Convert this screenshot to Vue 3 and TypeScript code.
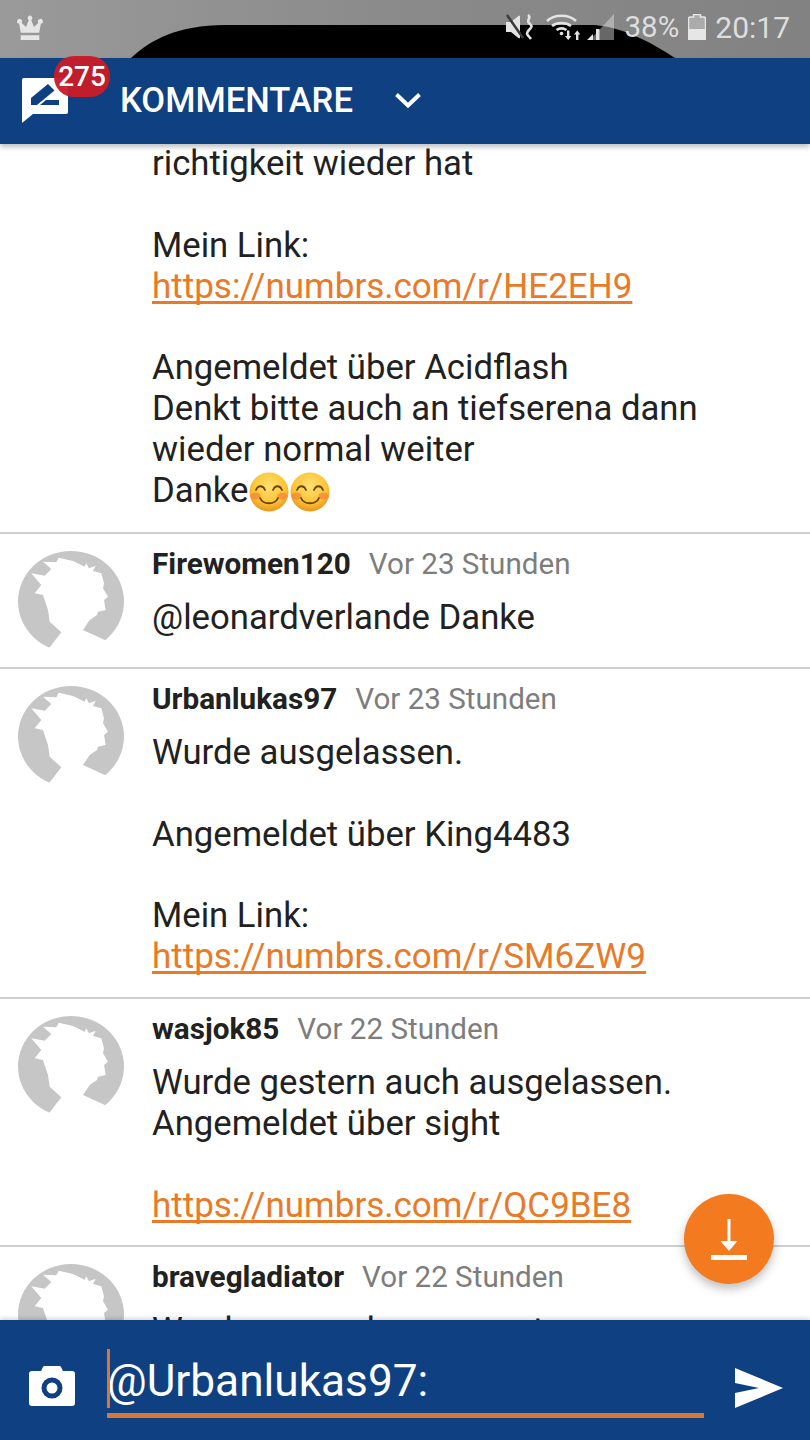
<template>
  <div class="phone">
    <!-- Status bar -->
    <div class="status-bar">
      <svg class="status-bg" viewBox="0 0 810 58" preserveAspectRatio="none">
        <path d="M131 58C150 40 178 25 225 25H595C625 28 650 42 675 58Z" fill="#000" />
      </svg>
      <svg class="crown" viewBox="3 0 24 26" width="30" height="27">
        <path
          d="M15 1.500a2.400 2.400 0 0 1 1.200 4.400l2.700 6.600 4.200-4a2.400 2.400 0 1 1 2.400.9L23.800 18H6.200L4.500 9.400a2.400 2.400 0 1 1 2.400-.9l4.200 4 2.700-6.600A2.400 2.400 0 0 1 15 1.500ZM6 20.500h18V25H6Z"
          fill="#e6e6e6"
        />
      </svg>
      <div class="status-right">
        <svg class="mute" viewBox="0 0 28 26" width="28" height="26">
          <path d="M0 8h5l8-6.500 1 .5v22l-1 .5L5 18H0Z" fill="#e4e4e4" />
          <path d="M1 1l16 23" stroke="#3c3c3c" stroke-width="2.500" />
          <path
            d="M22 1c4 3-2 5 1 8s4 3 0 7-1 5 2 9"
            fill="none"
            stroke="#e4e4e4"
            stroke-width="2.600"
          />
        </svg>
        <svg class="wifi" viewBox="0 0 38 26" width="38" height="26">
          <g fill="none" stroke="#e4e4e4" stroke-width="2.600">
            <path d="M1 7C8 0 23 0 30 7" />
            <path d="M6 12c5-4 14-4 19 0" />
            <path d="M10.500 16c3-2 7-2 10 0" />
          </g>
          <circle cx="15.500" cy="19.500" r="1.800" fill="#e4e4e4" />
          <path
            d="M21 16.500h2.400V22h2l-3.200 4-3.200-4h2ZM32.400 26H30v-5.500h-2l3.200-4 3.200 4h-2Z"
            fill="#e4e4e4"
          />
        </svg>
        <svg class="signal" viewBox="0 0 27 26" width="27" height="26">
          <path d="M27 0V26H3Z" fill="#e4e4e4" opacity="0.450" />
          <path d="M0 26l6-6v6ZM9 26V15h3.500v11Z" fill="#e4e4e4" />
        </svg>
        <span class="battery-pct">38%</span>
        <svg class="battery" viewBox="0 0 18 26" width="18" height="26">
          <path
            d="M5.500.5h7v2.500h3.500A1.500 1.500 0 0 1 17.500 4.500v20A1.500 1.500 0 0 1 16 26H2A1.500 1.500 0 0 1 .5 24.500v-20A1.500 1.500 0 0 1 2 3h3.500Z"
            fill="#ababab"
          />
          <path d="M.5 15h17v9.500A1.500 1.500 0 0 1 16 26H2A1.500 1.500 0 0 1 .5 24.500Z" fill="#e6e6e6" />
          <path
            d="M5.500.5h7v2.500h3.500A1.500 1.500 0 0 1 17.500 4.500v20A1.500 1.500 0 0 1 16 26H2A1.500 1.500 0 0 1 .5 24.500v-20A1.500 1.500 0 0 1 2 3h3.500Z"
            fill="none"
            stroke="#e6e6e6"
            stroke-width="1.500"
          />
        </svg>
        <span class="clock">20:17</span>
      </div>
    </div>

    <!-- Header -->
    <header class="app-header">
      <div class="comment-icon">
        <svg viewBox="0 0 46 45" width="46" height="45">
          <path
            d="M2 0h42a2 2 0 0 1 2 2v32a2 2 0 0 1-2 2H11L0 45V2a2 2 0 0 1 2-2Z"
            fill="#fff"
          />
          <path d="M9 27V20L26 6l6.500 6.500L15 27Z" fill="#0f4182" />
          <path d="M24 22H37v5H18Z" fill="#0f4182" />
        </svg>
        <span class="badge">275</span>
      </div>
      <h1>KOMMENTARE</h1>
      <svg class="chevron" viewBox="0 0 28 18" width="28" height="18">
        <path d="M2.500 3.500L14 14.500 25.500 3.500" fill="none" stroke="#fff" stroke-width="4" />
      </svg>
    </header>

    <!-- Kommentare -->
    <main class="comment-list">
      <article v-for="(c, i) in comments" :key="i" class="comment" :class="{ first: !c.name }">
        <div class="avatar-col">
          <svg v-if="c.name" class="avatar" viewBox="0 0 106 102">
            <ellipse cx="53" cy="50.500" rx="53" ry="50.500" fill="#c6c6c6" />
            <path :d="silhouette" fill="#fff" />
          </svg>
        </div>
        <div class="comment-main">
          <div v-if="c.name" class="meta">
            <span class="name">{{ c.name }}</span>
            <span class="time">{{ c.time }}</span>
          </div>
          <div class="body">
            <template v-for="(line, j) in c.lines" :key="j">
              <div v-if="line.startsWith('https')" class="line">
                <a class="link">{{ line }}</a>
              </div>
              <div v-else-if="line === 'Danke'" class="line">
                Danke<svg v-for="n in 2" :key="n" class="emoji" viewBox="0 0 40 40">
                  <defs>
                    <radialGradient id="face" cx="50%" cy="35%" r="65%">
                      <stop offset="0%" stop-color="#ffe270" />
                      <stop offset="65%" stop-color="#fcc437" />
                      <stop offset="100%" stop-color="#ec9518" />
                    </radialGradient>
                  </defs>
                  <circle cx="20" cy="20" r="19.500" fill="url(#face)" />
                  <ellipse cx="6.500" cy="24" rx="5" ry="3.500" fill="#f7803a" opacity="0.700" />
                  <ellipse cx="33.500" cy="24" rx="5" ry="3.500" fill="#f7803a" opacity="0.700" />
                  <g fill="none" stroke="#6b4310" stroke-width="1.800" stroke-linecap="round">
                    <path d="M7 18c2-5 7-5 9 0M24 18c2-5 7-5 9 0" />
                    <path d="M11 26c3 7 15 7 18 0" />
                  </g>
                </svg>
              </div>
              <div v-else class="line">{{ line || '&nbsp;' }}</div>
            </template>
          </div>
        </div>
      </article>
    </main>

    <!-- Scroll nach unten -->
    <button class="fab" aria-label="Nach unten">
      <svg viewBox="0 0 36 41" width="36" height="41">
        <path d="M16.500 0h3v22h7L18 32 9.500 22h7ZM0 36h36v5H0Z" fill="#fff" />
      </svg>
    </button>

    <!-- Eingabe -->
    <footer class="composer">
      <svg class="camera" viewBox="0 0 46 40" width="46" height="40">
        <path
          d="M3 5h9l2-4a2 2 0 0 1 2-1h14a2 2 0 0 1 2 1l2 4h9a3 3 0 0 1 3 3v29a3 3 0 0 1-3 3H3a3 3 0 0 1-3-3V8a3 3 0 0 1 3-3Z"
          fill="#fff"
        />
        <circle cx="23" cy="22" r="10.500" fill="#0f4182" />
        <circle cx="23" cy="22" r="5.500" fill="#fff" />
      </svg>
      <div class="input-wrap">
        <span class="caret"></span>
        <span class="input-text">@Urbanlukas97:</span>
      </div>
      <svg class="send" viewBox="0 0 48 40" width="48" height="40">
        <path d="M0 0L48 20 0 40V25L24 20 0 15Z" fill="#fff" />
      </svg>
    </footer>
  </div>
</template>

<script setup lang="ts">
interface CommentItem {
  name?: string
  time?: string
  lines: string[]
}

const silhouette =
  'M40.700 6.700L55 10 66.700 15.700 68.300 12.300 71 17.300 77.700 14.700 75 20 83.300 22.300 86 32.300 85 37.300 90 45.700 86 49 87.700 59 80 60.700 79 64 71.700 69 65 79 90.700 90.700 91.700 102H28.300V100.700L43.300 81.300 31.700 70.700 30 59 25 44 16.700 42.300 23.300 34 13.300 22.300 26.700 24.700 33.300 18 25 10.700 38.300 11.300Z'

const comments: CommentItem[] = [
  {
    lines: [
      'richtigkeit wieder hat',
      '',
      'Mein Link:',
      'https://numbrs.com/r/HE2EH9',
      '',
      'Angemeldet über Acidflash',
      'Denkt bitte auch an tiefserena dann',
      'wieder normal weiter',
      'Danke',
    ],
  },
  {
    name: 'Firewomen120',
    time: 'Vor 23 Stunden',
    lines: ['@leonardverlande Danke'],
  },
  {
    name: 'Urbanlukas97',
    time: 'Vor 23 Stunden',
    lines: [
      'Wurde ausgelassen.',
      '',
      'Angemeldet über King4483',
      '',
      'Mein Link:',
      'https://numbrs.com/r/SM6ZW9',
    ],
  },
  {
    name: 'wasjok85',
    time: 'Vor 22 Stunden',
    lines: [
      'Wurde gestern auch ausgelassen.',
      'Angemeldet über sight',
      '',
      'https://numbrs.com/r/QC9BE8',
    ],
  },
  {
    name: 'bravegladiator',
    time: 'Vor 22 Stunden',
    lines: ['Wurde gerne dazu gesagt'],
  },
]
</script>

<style scoped>
.phone {
  position: relative;
  display: flex;
  flex-direction: column;
  width: 810px;
  height: 1440px;
  overflow: hidden;
  background: #fff;
  font-family: Roboto, 'Liberation Sans', sans-serif;
}

/* === Status bar === */
.status-bar {
  position: relative;
  flex: 0 0 58px;
  display: flex;
  align-items: center;
  justify-content: space-between;
  padding: 0 20px 4px 15px;
  box-sizing: border-box;
  background: linear-gradient(to right, #9a9a9a, #8a8a8a 50%, #828282);
}

.status-bg {
  position: absolute;
  inset: 0;
  width: 100%;
  height: 100%;
}

.crown,
.status-right {
  position: relative;
}

.status-right {
  display: flex;
  align-items: center;
  color: #dedede;
  font-size: 29.5px;
}

.wifi {
  margin-left: 12px;
}

.signal {
  margin-left: 3px;
}

.battery-pct {
  margin-left: 11px;
}

.battery {
  margin-left: 9px;
}

.clock {
  margin-left: 9px;
  font-size: 30px;
}

/* === Header === */
.app-header {
  flex: 0 0 86px;
  display: flex;
  align-items: center;
  padding: 0 0 2px 22px;
  box-sizing: border-box;
  background: #0f4182;
  box-shadow: 0 3px 5px rgba(0, 0, 0, 0.25);
  z-index: 2;
}

.comment-icon {
  position: relative;
  width: 46px;
  height: 45px;
  margin-top: 1px;
}

.comment-icon svg {
  display: block;
}

.badge {
  position: absolute;
  top: -22px;
  left: 32px;
  width: 56px;
  height: 41px;
  border-radius: 20px;
  background: rgba(200, 28, 42, 0.96);
  color: #fff;
  font-size: 28px;
  font-weight: 500;
  line-height: 41px;
  text-align: center;
}

.app-header h1 {
  margin: 0 0 0 52px;
  color: #fff;
  font-size: 34.6px;
  font-weight: 500;
}

.chevron {
  margin-left: 41px;
}

/* === Comments === */
.comment-list {
  flex: 1;
  min-height: 0;
  overflow: hidden;
}

.comment {
  display: flex;
  box-sizing: border-box;
  min-height: 135px;
  border-top: 2px solid #cfcfcf;
}

.comment.first {
  min-height: 0;
  margin-top: -1px;
  border-top: none;
}

.avatar-col {
  flex: 0 0 152px;
}

.avatar {
  display: block;
  width: 106px;
  height: 102px;
  margin: 17px 0 0 18px;
}

.comment-main {
  padding-bottom: 20px;
}

.first .comment-main {
  padding-bottom: 21.35px;
}

.meta {
  display: flex;
  align-items: baseline;
  height: 39px;
  margin-top: 10px;
  margin-bottom: 14px;
  line-height: 39px;
}

.name {
  margin-right: 18px;
  color: #212121;
  font-size: 29.7px;
  font-weight: 700;
}

.time {
  color: #7d7d7d;
  font-size: 29.6px;
}

.body {
  color: #212121;
  font-size: 34.7px;
  line-height: 40.85px;
}

.line {
  height: 40.85px;
  white-space: nowrap;
}

.link {
  color: #e87a28;
  font-size: 35px;
  text-decoration: underline;
  text-decoration-thickness: 3px;
  text-decoration-skip-ink: none;
  text-underline-offset: 3px;
}

.emoji {
  display: inline-block;
  width: 40px;
  height: 40px;
  margin-left: 1px;
  vertical-align: -10px;
}

/* === FAB === */
.fab {
  position: absolute;
  left: 684px;
  top: 1194px;
  display: flex;
  align-items: center;
  justify-content: center;
  width: 90px;
  height: 90px;
  padding: 0;
  border: none;
  border-radius: 50%;
  background: #f47a1f;
  box-shadow: 0 5px 10px rgba(0, 0, 0, 0.25);
}

/* === Composer === */
.composer {
  flex: 0 0 120px;
  display: flex;
  align-items: center;
  padding: 7px 27px 0 29px;
  box-sizing: border-box;
  background: #0f4182;
  z-index: 2;
  box-shadow: 0 -2px 4px rgba(0, 0, 0, 0.15);
}

.camera {
  margin-top: 4px;
}

.send {
  margin-top: 8px;
}

.input-wrap {
  position: relative;
  width: 597px;
  height: 69px;
  margin: 0 31px 0 32px;
  box-sizing: border-box;
  border-bottom: 5px solid #d9763a;
}

.caret {
  position: absolute;
  left: 0;
  top: 0;
  width: 3px;
  height: 59px;
  background: #d9763a;
}

.input-text {
  display: block;
  color: #fff;
  font-size: 44.2px;
  line-height: 64px;
}
</style>

<style>
html,
body {
  margin: 0;
  background: #fff;
}
</style>
